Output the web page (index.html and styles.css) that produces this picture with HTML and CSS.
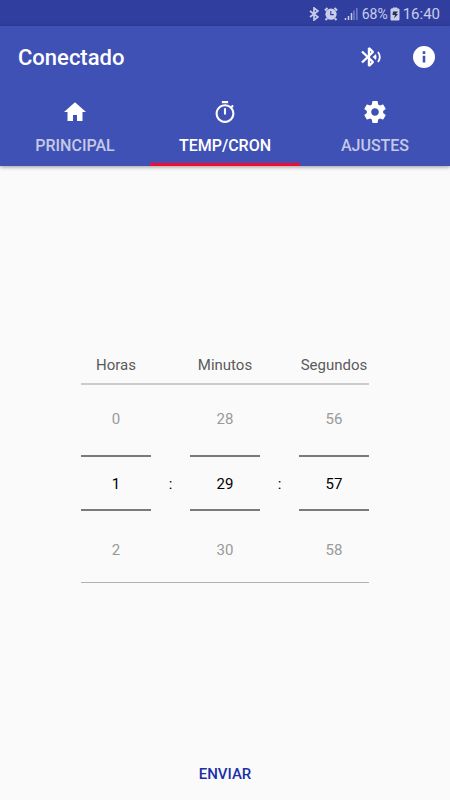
FILE: index.html
```html
<!DOCTYPE html>
<html lang="es">
<head>
<meta charset="utf-8">
<meta name="viewport" content="width=device-width, initial-scale=1">
<title>Conectado</title>
<link rel="stylesheet" href="styles.css">
</head>
<body>
<div class="status">
  <svg class="status-bt" viewBox="0 0 10 14" aria-hidden="true"><path d="M1 4l8 6-4 3V1l4 3-8 6" fill="none" stroke="currentColor" stroke-width="1.7"/></svg>
  <svg class="status-alarm" viewBox="0 0 14 14" aria-hidden="true">
    <path d="M1 3.500L3.500 1M13 3.500L10.500 1M3 11.500L1.500 13M11 11.500L12.500 13" stroke="currentColor" stroke-width="2"/>
    <circle cx="7" cy="7.200" r="5.600" fill="currentColor"/>
    <path d="M6.800 4v3.600h3" fill="none" stroke="#303f9f" stroke-width="1.200"/>
  </svg>
  <svg class="status-signal" viewBox="0 0 14 14" aria-hidden="true">
    <path d="M1.500 11v2M4.500 9v4M7.500 6v7" stroke="currentColor" stroke-width="1.500"/>
    <path d="M10 3.500V13M12.800 1v12" stroke="currentColor" stroke-width="1.500" opacity=".45"/>
  </svg>
  <span class="battery-level">68%</span>
  <svg class="status-battery" viewBox="0 0 10 14" aria-hidden="true">
    <path d="M3 1h4v1h2v11H1V2h2z" fill="currentColor" stroke="currentColor" stroke-width="1"/>
    <path d="M3 4.500h5L6 7h2l-4 4.500 1-3.500H2.500z" fill="#26304f"/>
  </svg>
  <time class="clock">16:40</time>
</div>
<header class="appbar">
  <div class="toolbar">
    <h1 class="title">Conectado</h1>
    <button class="action action-bt" type="button" aria-label="Bluetooth">
      <svg viewBox="0 0 27 27">
        <path d="M4 7.500L15 18L11 22V4L15 8L4 18.500" fill="none" stroke="currentColor" stroke-width="2.400" stroke-linejoin="bevel"/>
        <path d="M14.500 13l3.500-3q1 3 0 6z" fill="currentColor"/>
        <path d="M20 8q3.600 5 0 10" fill="none" stroke="currentColor" stroke-width="1.800"/>
      </svg>
    </button>
    <button class="action action-info" type="button" aria-label="Información">
      <svg viewBox="0 0 24 24"><path fill="currentColor" d="M12 1a11 11 0 100 22 11 11 0 000-22zm1.300 16.500h-2.600v-6.700h2.600v6.700zm0-8.600h-2.600V6.300h2.600v2.600z"/></svg>
    </button>
  </div>
  <nav class="tabs">
    <a class="tab" href="#principal">
      <svg viewBox="0 0 24 24" aria-hidden="true"><path fill="currentColor" d="M10 21v-6h4v6h5.500v-9H23L12 2.200 1 12h3.500v9z"/></svg>
      <span class="tab-label">PRINCIPAL</span>
    </a>
    <a class="tab tab-active" href="#temp" aria-current="page">
      <svg viewBox="1 0 22 23" aria-hidden="true"><path fill="currentColor" d="M15 1H9v2h6V1zm-4 13h2V8h-2v6zm8.030-6.610l1.420-1.420c-.43-.51-.9-.99-1.410-1.410l-1.420 1.420C16.070 4.740 14.120 4 12 4c-4.970 0-9 4.030-9 9s4.020 9 9 9 9-4.030 9-9c0-2.120-.74-4.070-1.970-5.610zM12 20c-3.870 0-7-3.130-7-7s3.130-7 7-7 7 3.130 7 7-3.130 7-7 7z"/></svg>
      <span class="tab-label">TEMP/CRON</span>
    </a>
    <a class="tab" href="#ajustes">
      <svg viewBox="1 1 22 22" aria-hidden="true"><path fill="currentColor" d="M19.430 12.980c.04-.32.07-.64.07-.98s-.03-.66-.07-.98l2.110-1.650c.19-.15.24-.42.12-.64l-2-3.460c-.12-.22-.39-.3-.61-.22l-2.490 1c-.52-.4-1.080-.73-1.690-.98l-.38-2.650C14.460 2.180 14.250 2 14 2h-4c-.25 0-.46.18-.49.42l-.38 2.650c-.61.25-1.170.59-1.690.98l-2.490-1c-.23-.09-.49 0-.61.22l-2 3.460c-.13.22-.07.49.12.64l2.110 1.650c-.04.32-.07.65-.07.98s.03.66.07.98l-2.110 1.650c-.19.15-.24.42-.12.64l2 3.460c.12.22.39.3.61.22l2.490-1c.52.4 1.080.73 1.690.98l.38 2.650c.03.24.24.42.49.42h4c.25 0 .46-.18.49-.42l.38-2.650c.61-.25 1.170-.59 1.690-.98l2.490 1c.23.09.49 0 .61-.22l2-3.460c.12-.22.07-.49-.12-.64l-2.110-1.650zM12 15.500c-1.930 0-3.500-1.570-3.500-3.500s1.570-3.500 3.500-3.500 3.500 1.570 3.500 3.500-1.570 3.500-3.500 3.500z"/></svg>
      <span class="tab-label">AJUSTES</span>
    </a>
  </nav>
</header>
<main class="content">
  <form class="picker" id="timer">
    <div class="labels">
      <label for="hours">Horas</label>
      <label for="minutes">Minutos</label>
      <label for="seconds">Segundos</label>
    </div>
    <div class="wheels">
      <div class="wheel">
        <button class="step step-prev" type="button">0</button>
        <input class="value" id="hours" inputmode="numeric" value="1">
        <button class="step step-next" type="button">2</button>
      </div>
      <span class="colon">:</span>
      <div class="wheel">
        <button class="step step-prev" type="button">28</button>
        <input class="value" id="minutes" inputmode="numeric" value="29">
        <button class="step step-next" type="button">30</button>
      </div>
      <span class="colon">:</span>
      <div class="wheel">
        <button class="step step-prev" type="button">56</button>
        <input class="value" id="seconds" inputmode="numeric" value="57">
        <button class="step step-next" type="button">58</button>
      </div>
    </div>
  </form>
</main>
<footer class="footer">
  <button class="send" type="submit" form="timer">ENVIAR</button>
</footer>
</body>
</html>
```
FILE: styles.css
```css
* {
  box-sizing: border-box;
}

body {
  margin: 0;
  min-height: 100vh;
  display: flex;
  flex-direction: column;
  background: #fafafa;
  color: #000;
  font-family: Roboto, "Liberation Sans", sans-serif;
  font-size: 15px;
}

button,
input {
  margin: 0;
  padding: 0;
  border: 0;
  border-radius: 0;
  background: none;
  color: inherit;
  font: inherit;
}

svg {
  display: block;
}

.status {
  display: flex;
  align-items: center;
  justify-content: flex-end;
  height: 26px;
  padding: 2px 10px 0 0;
  background: #303f9f;
  color: #c9cdea;
}

.status svg {
  height: 14px;
}

.status-bt {
  width: 10px;
  margin-right: 5px;
}

.status-alarm {
  width: 14px;
  margin-right: 6px;
}

.status-signal {
  width: 14px;
  margin-right: 4px;
}

.battery-level {
  font-size: 14px;
  margin-right: 2px;
}

.status-battery {
  width: 10px;
  margin-right: 3px;
}

.appbar {
  background: #3f51b5;
  color: #fff;
  box-shadow: 0 1px 4px rgba(0, 0, 0, .4);
}

.toolbar {
  display: flex;
  align-items: center;
  height: 62px;
  padding: 0 14px 0 18px;
}

.title {
  flex: 1;
  margin: 0;
  font-size: 22px;
  font-weight: 500;
}

.action svg {
  width: 24px;
  height: 24px;
}

.action-bt {
  margin-right: 27px;
}

.action-bt svg {
  width: 27px;
  height: 27px;
}

.tabs {
  display: grid;
  grid-template-columns: repeat(3, 1fr);
}

.tab {
  display: flex;
  flex-direction: column;
  align-items: center;
  gap: 12px;
  height: 78px;
  padding-top: 12px;
  border-bottom: 3px solid transparent;
  color: #fff;
  text-decoration: none;
}

.tab svg {
  width: 24px;
  height: 24px;
}

.tab-label {
  font-size: 16px;
  font-weight: 500;
  line-height: 20px;
  color: rgba(255, 255, 255, .7);
}

.tab-active {
  border-bottom-color: #f50a32;
}

.tab-active .tab-label {
  color: #fff;
}

.content {
  flex: 1;
  display: flex;
  align-items: center;
  justify-content: center;
  padding-top: 16px;
}

.picker {
  width: 64%;
}

.labels {
  display: flex;
  justify-content: space-between;
  height: 36px;
  line-height: 36px;
  color: #5a5a5a;
}

.labels label {
  width: 70px;
  text-align: center;
}

.wheels {
  display: flex;
  align-items: center;
  justify-content: space-between;
  border-top: 2px solid #ccc;
  border-bottom: 1px solid #b0b0b0;
}

.wheel {
  display: flex;
  flex-direction: column;
  width: 70px;
}

.step {
  height: 71px;
  color: #999;
}

.step-prev {
  height: 70px;
  padding-bottom: 3px;
}

.step-next {
  padding-top: 6px;
}

.value {
  width: 100%;
  height: 56px;
  padding-top: 2px;
  border-top: 2px solid #7a7a7a;
  border-bottom: 2px solid #7a7a7a;
  text-align: center;
}

.footer {
  display: flex;
  justify-content: center;
  padding: 8px;
}

.send {
  height: 36px;
  padding: 0 16px;
  color: #1a2fa8;
  font-weight: 500;
}
```
